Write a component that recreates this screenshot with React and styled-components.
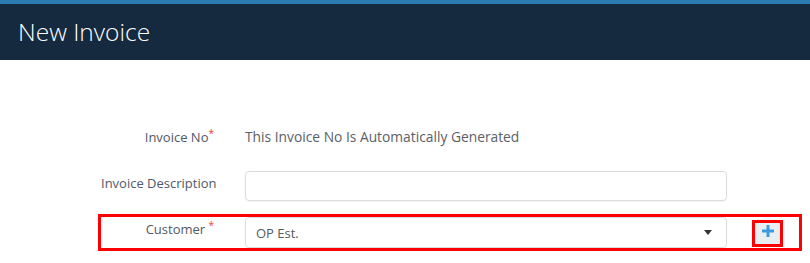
import React from "react";
import styled, { createGlobalStyle } from "styled-components";

const Global = createGlobalStyle`
  * { box-sizing: border-box; }
  body {
    margin: 0;
    background: #ffffff;
    font-family: "Open Sans", "Liberation Sans", sans-serif;
  }
`;

const App = () => {
  return (
    <>
      <Global />
      <Page>
        <Header>
          <Title>New Invoice</Title>
        </Header>
        <Form>
          <Row>
            <Label>
              Invoice No<Req>*</Req>
            </Label>
            <Value>This Invoice No Is Automatically Generated</Value>
          </Row>
          <Row gap={16}>
            <Label>Invoice Description</Label>
            <Input />
          </Row>
          <Row gap={16} highlight>
            <Label>
              Customer <Req>*</Req>
            </Label>
            <Select>
              <span>OP Est.</span>
              <Caret />
            </Select>
            <AddButton>
              <PlusIcon />
            </AddButton>
          </Row>
        </Form>
      </Page>
    </>
  );
};

export default App;

const PlusIcon = () => (
  <svg width="12" height="12" viewBox="0 0 12 12">
    <rect x="4.5" y="0" width="3" height="12" fill="#3b9be0" />
    <rect x="0" y="4.5" width="12" height="3" fill="#3b9be0" />
  </svg>
);

const Page = styled.div`
  width: 810px;
  height: 263px;
  overflow: hidden;
`;

const Header = styled.div`
  height: 60px;
  background: #152a3f;
  border-top: 4px solid #2a7db3;
  display: flex;
  align-items: center;
  padding-left: 18px;
`;

const Title = styled.div`
  color: #ffffff;
  font-size: 24.5px;
  font-weight: 300;
  margin-top: -2px;
`;

const Form = styled.div`
  padding: 65px 0 0 101px;
`;

const Row = styled.div`
  width: 698px;
  display: flex;
  align-items: flex-start;
  margin-top: ${(p) => p.gap || 0}px;
  min-height: 30px;
  outline: ${(p) => (p.highlight ? "3px solid #ff0000" : "none")};
`;

const Label = styled.div`
  width: 113px;
  margin-right: 31px;
  text-align: right;
  font-size: 13px;
  color: #505869;
  padding-top: 4px;
  line-height: 16px;
  white-space: nowrap;
`;

const Req = styled.sup`
  color: #e8413c;
  font-size: 10px;
  vertical-align: 5px;
  line-height: 0;
`;

const Value = styled.div`
  font-size: 13.8px;
  color: #5b6068;
  line-height: 30px;
  margin-top: -3px;
`;

const Input = styled.div`
  width: 482px;
  height: 30px;
  border: 1px solid #dcdcdc;
  border-radius: 4px;
  box-shadow: 0 1px 1px rgba(0, 0, 0, 0.04);
`;

const Select = styled.div`
  width: 482px;
  height: 31px;
  border: 1px solid #dcdcdc;
  border-radius: 4px;
  padding: 0 8px 0 10px;
  display: flex;
  align-items: center;
  justify-content: space-between;
  font-size: 13px;
  color: #555a60;
  box-shadow: 0 1px 1px rgba(0, 0, 0, 0.04);
`;

const Caret = styled.span`
  width: 0;
  height: 0;
  border-left: 4.5px solid transparent;
  border-right: 4.5px solid transparent;
  border-top: 5px solid #333333;
  margin-right: 6px;
`;

const AddButton = styled.div`
  margin-left: 25px;
  margin-top: 3px;
  width: 31px;
  height: 27px;
  background: #e8eef2;
  border: 3px solid #ff0000;
  display: flex;
  align-items: flex-start;
  justify-content: center;
  padding-top: 2px;
`;
